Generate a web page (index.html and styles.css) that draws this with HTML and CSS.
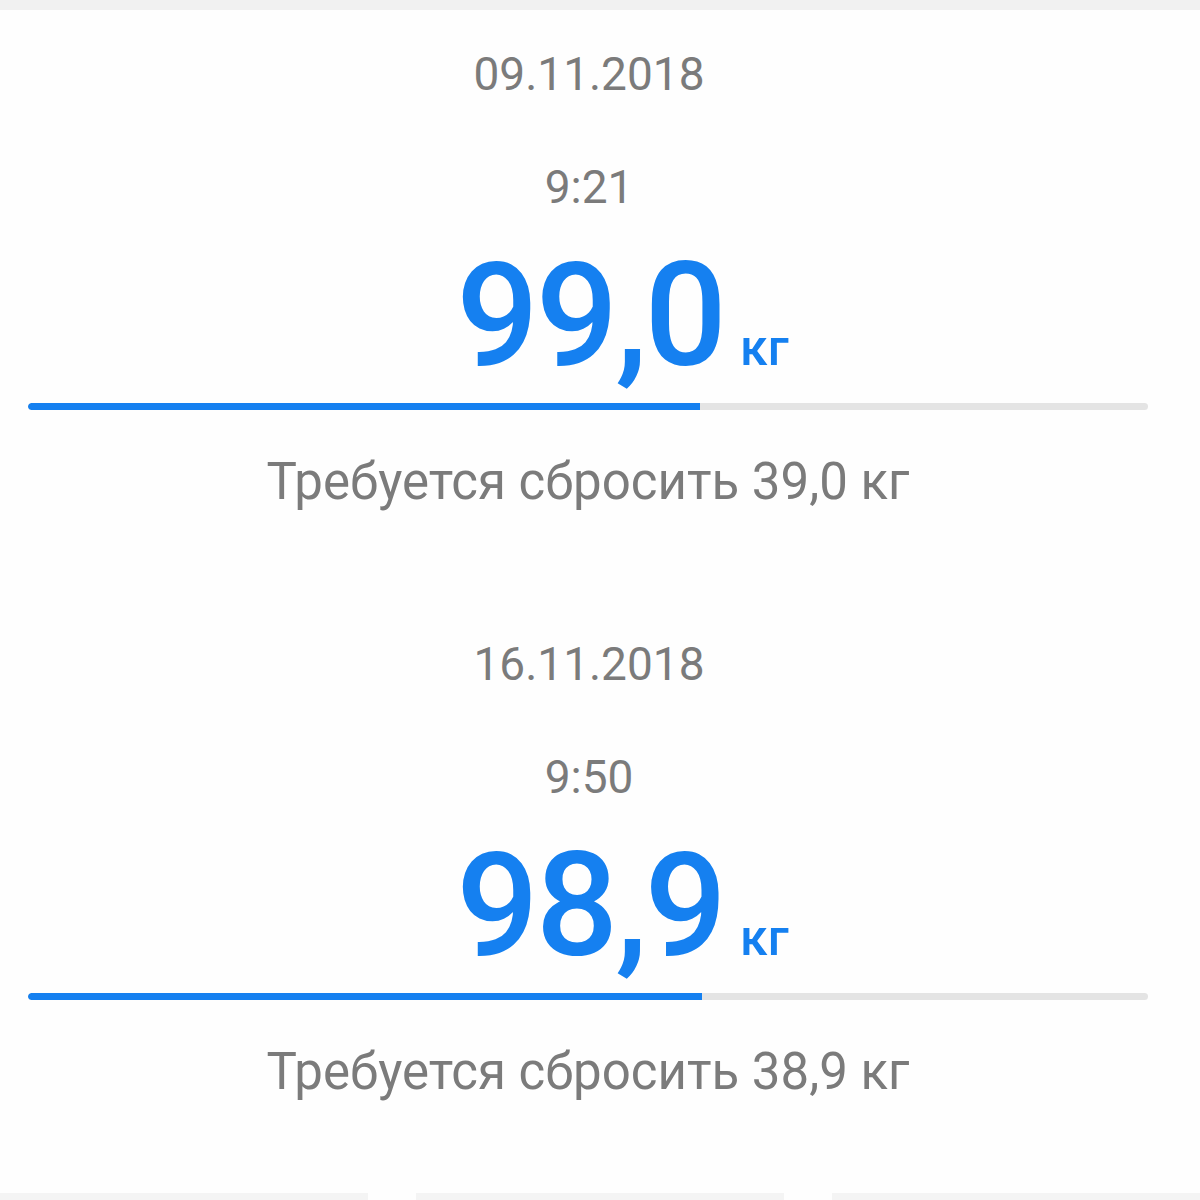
FILE: index.html
```html
<!DOCTYPE html>
<html lang="ru">
<head>
    <meta charset="UTF-8">
    <meta name="viewport" content="width=device-width, initial-scale=1.0">
    <title>Дневник веса</title>
    <link rel="stylesheet" href="styles.css">
</head>
<body>
    <div class="top-bar"></div>

    <div class="entries">
        <div class="entry">
            <div class="entry-date">09.11.2018</div>
            <div class="entry-time">9:21</div>
            <div class="entry-weight">
                <span class="weight-value">99,0</span>
                <span class="weight-unit">кг</span>
            </div>
            <div class="progress">
                <div class="progress-fill" style="width: 60%"></div>
            </div>
            <div class="entry-left">Требуется сбросить 39,0 кг</div>
        </div>

        <div class="entry">
            <div class="entry-date">16.11.2018</div>
            <div class="entry-time">9:50</div>
            <div class="entry-weight">
                <span class="weight-value">98,9</span>
                <span class="weight-unit">кг</span>
            </div>
            <div class="progress">
                <div class="progress-fill" style="width: 60.2%"></div>
            </div>
            <div class="entry-left">Требуется сбросить 38,9 кг</div>
        </div>
    </div>

    <div class="bottom-bar">
        <span></span>
        <span></span>
        <span></span>
    </div>
</body>
</html>
```

FILE: styles.css
```css
body {
    font-family: Roboto, "Noto Sans", sans-serif;
    background-color: #fefefe;
    color: #7b7b7b;
    margin: 0;
    height: 1200px;
    display: flex;
    flex-direction: column;
    overflow: hidden;
}
.top-bar {
    height: 10px;
    background-color: #f1f1f1;
}
.entries {
    flex: 1;
}
.entry {
    height: 590px;
    padding: 37px 24px 0 0;
    box-sizing: border-box;
    display: flex;
    flex-direction: column;
    align-items: center;
}
.entry-date,
.entry-time {
    font-size: 46px;
    line-height: 54px;
    padding-left: 2px;
}
.entry-time {
    margin-top: 59px;
}
.entry-weight {
    display: flex;
    align-items: baseline;
    gap: 16px;
    margin-top: 29px;
    padding-left: 69px;
    color: #1580f0;
}
.weight-value {
    font-size: 145px;
    line-height: 145px;
    font-weight: 500;
    letter-spacing: -3px;
}
.weight-unit {
    font-size: 50px;
    font-weight: 500;
}
.progress {
    align-self: stretch;
    height: 7px;
    margin: 15px 28px 0 28px;
    background-color: #e4e4e4;
    border-radius: 4px;
    overflow: hidden;
}
.progress-fill {
    height: 100%;
    background-color: #1580f0;
    border-radius: 4px 0 0 4px;
}
.entry-left {
    margin-top: 44px;
    font-size: 51px;
    line-height: 56px;
}
.bottom-bar {
    height: 7px;
    display: flex;
    gap: 48px;
}
.bottom-bar span {
    flex: 1;
    background-color: #f4f4f4;
}
```
